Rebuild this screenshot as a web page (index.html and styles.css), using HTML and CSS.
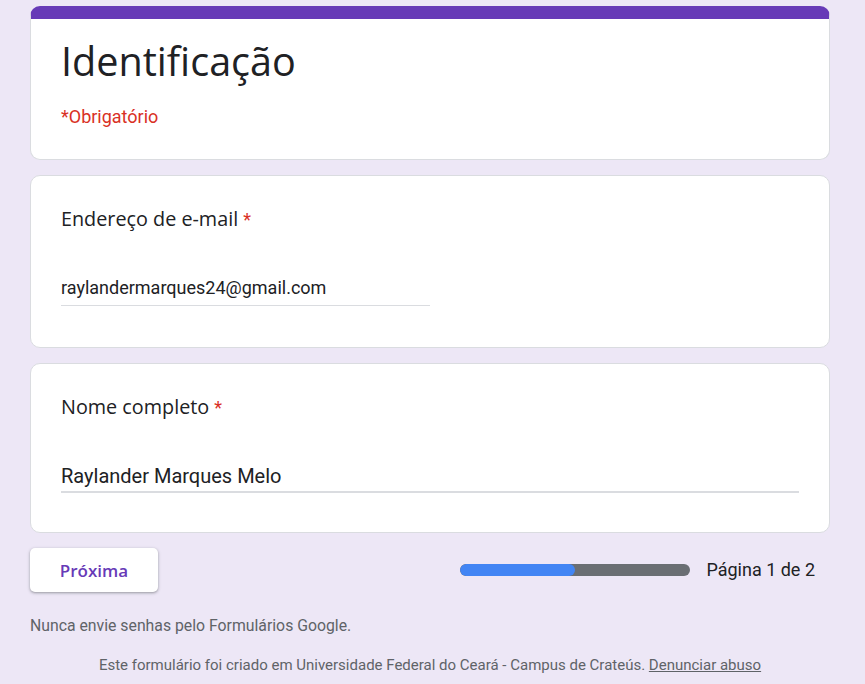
FILE: index.html
```html
<!DOCTYPE html>
<html lang="pt-BR">
<head>
<meta charset="utf-8">
<title>Identificação</title>
<link rel="stylesheet" href="styles.css">
</head>
<body>
<main class="form">
  <section class="card card-header">
    <h1 class="form-title">Identificação</h1>
    <div class="required-note">*Obrigatório</div>
  </section>

  <section class="card question question-email">
    <div class="q-label">Endereço de e-mail <span class="star">*</span></div>
    <div class="answer answer-half">raylandermarques24@gmail.com</div>
  </section>

  <section class="card question question-name">
    <div class="q-label">Nome completo <span class="star">*</span></div>
    <div class="answer answer-full">Raylander Marques Melo</div>
  </section>

  <div class="nav-row">
    <button class="btn-next" type="button">Próxima</button>
    <div class="progress">
      <div class="progress-bar"><div class="progress-fill" style="width:50%"></div></div>
      <span class="progress-text">Página 1 de 2</span>
    </div>
  </div>

  <p class="warning">Nunca envie senhas pelo Formulários Google.</p>
  <p class="footer">Este formulário foi criado em Universidade Federal do Ceará - Campus de Crateús. <a href="#" class="abuse">Denunciar abuso</a></p>
</main>
</body>
</html>
```

FILE: styles.css
```css
* { box-sizing: border-box; }

html, body {
  margin: 0;
  padding: 0;
  background: #ede7f6;
}

body {
  font-family: Roboto, "Liberation Sans", sans-serif;
  color: #202124;
}

.form {
  width: 800px;
  margin-left: 30px;
  padding-top: 6px;
  display: flex;
  flex-direction: column;
}

.card {
  background: #fff;
  border: 1px solid #dadce0;
  border-radius: 10px;
  margin-bottom: 15px;
}

.card-header {
  border-top: 13px solid #673ab7;
  padding: 15px 30px 30px;
  height: 154px;
}

.form-title {
  margin: 0;
  font-family: "Open Sans", sans-serif;
  font-weight: 400;
  font-size: 39.6px;
  line-height: 54px;
  color: #202124;
}

.required-note {
  margin-top: 17px;
  font-size: 18px;
  line-height: 24px;
  color: #d93025;
}

.question {
  padding: 31px 30px 40px;
}

.question-email {
  padding-bottom: 41px;
}

.question-name {
  padding-top: 31px;
  padding-bottom: 39px;
}

.q-label {
  font-family: "Open Sans", sans-serif;
  font-size: 19.8px;
  line-height: 24px;
  height: 24px;
  color: #202124;
}

.star {
  color: #d93025;
  font-family: Roboto, sans-serif;
  font-size: 18px;
  line-height: 18px;
}

.answer {
  margin-top: 45px;
  line-height: 24px;
  color: #202124;
}

.answer-half {
  width: 50%;
  font-size: 18px;
  padding-bottom: 5px;
  border-bottom: 1px solid #dadce0;
}

.answer-full {
  width: 100%;
  font-size: 20px;
  padding-bottom: 3px;
  border-bottom: 2px solid #dadce0;
}

.nav-row {
  display: flex;
  align-items: center;
  justify-content: space-between;
  padding-right: 15px;
}

.btn-next {
  width: 128px;
  height: 44px;
  border: none;
  border-radius: 5px;
  background: #fff;
  color: #673ab7;
  font-family: "Open Sans", sans-serif;
  font-weight: 600;
  font-size: 17px;
  box-shadow: 0 1px 2px 0 rgba(60,64,67,.3), 0 1px 3px 1px rgba(60,64,67,.15);
  padding: 0;
}

.progress {
  display: flex;
  align-items: center;
  gap: 16px;
}

.progress-bar {
  width: 230px;
  height: 12px;
  border-radius: 6px;
  background: #6a6e73;
  overflow: hidden;
}

.progress-fill {
  height: 100%;
  background: #4285f4;
  border-radius: 6px;
}

.progress-text {
  font-size: 18px;
  line-height: 24px;
  color: #202124;
}

.warning {
  margin: 24px 0 0;
  font-size: 15.8px;
  line-height: 20px;
  color: #5f6368;
}

.footer {
  margin: 19px 0 0;
  text-align: center;
  font-size: 15px;
  line-height: 20px;
  color: #5f6368;
}

.abuse {
  color: #5f6368;
  text-decoration: underline;
}
```
